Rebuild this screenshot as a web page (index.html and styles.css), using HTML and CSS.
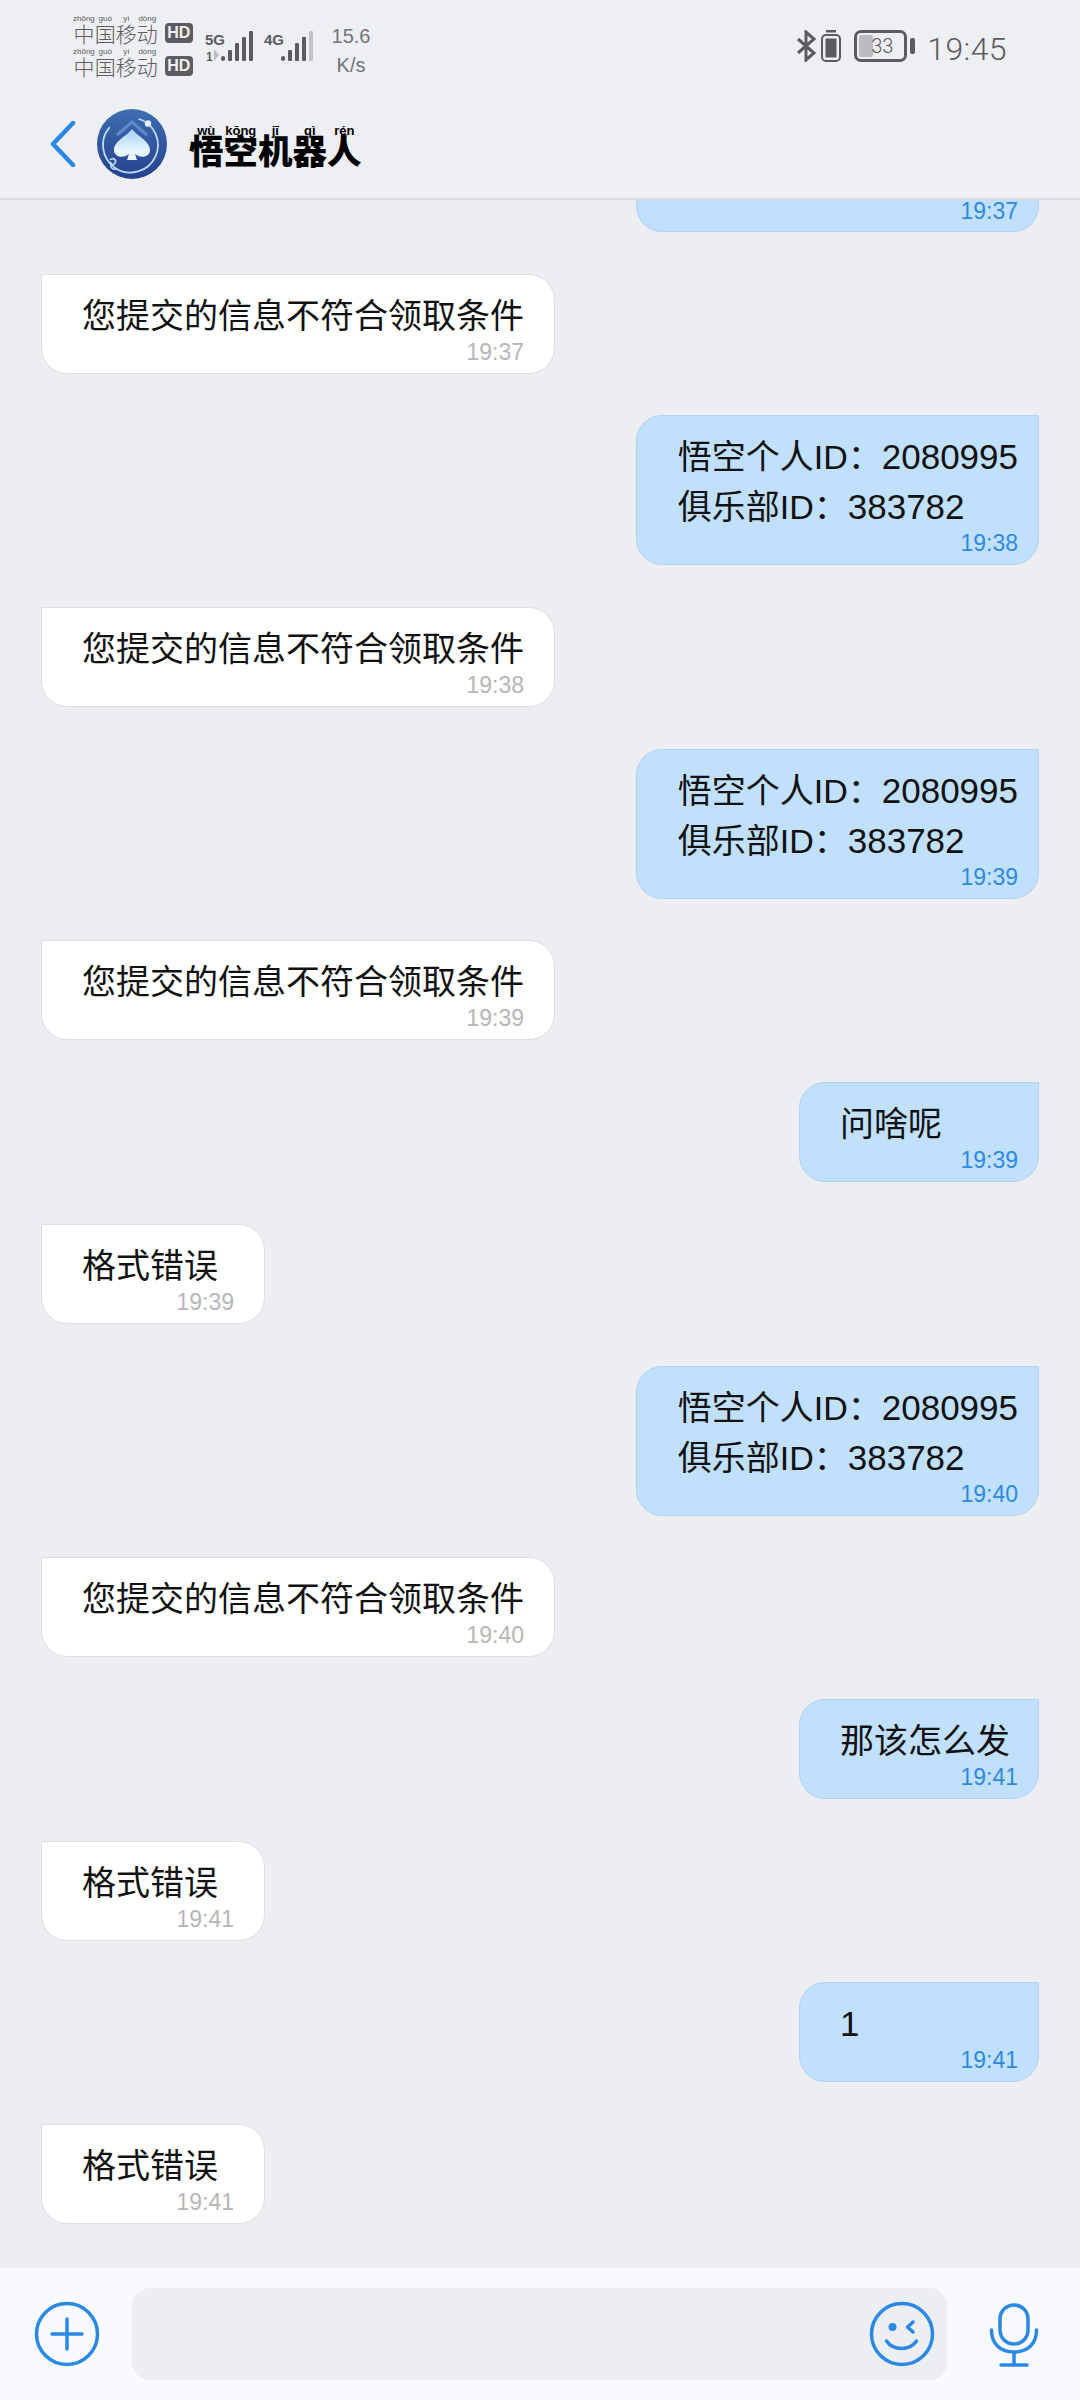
FILE: index.html
```html
<!DOCTYPE html>
<html lang="zh">
<head>
  <meta charset="UTF-8">
  <meta name="viewport" content="width=device-width, initial-scale=1">
  <title>悟空机器人</title>
  <link rel="stylesheet" href="styles.css">
</head>
<body>
<div class="app">

  <header class="top">
    <div class="status">
      <div class="carriers">
        <div class="carrier">
          <ruby>中<rt>zhōng</rt>国<rt>guó</rt>移<rt>yí</rt>动<rt>dòng</rt></ruby>
          <span class="hd">HD</span>
        </div>
        <div class="carrier">
          <ruby>中<rt>zhōng</rt>国<rt>guó</rt>移<rt>yí</rt>动<rt>dòng</rt></ruby>
          <span class="hd">HD</span>
        </div>
      </div>

      <!-- 5G signal -->
      <svg class="signal" width="50" height="36" viewBox="0 0 50 36">
        <text x="0" y="16" class="net">5G</text>
        <text x="1" y="32" class="net-small">1</text>
        <path d="M9 20v12l5-6z" fill="#bdbdc1"/>
        <rect x="16" y="27" width="4" height="5" rx="2" fill="#5b5b60"/>
        <rect x="23" y="21" width="4" height="11" rx="1" fill="#5b5b60"/>
        <rect x="30" y="14" width="4" height="18" rx="1" fill="#5b5b60"/>
        <rect x="37" y="8" width="4" height="24" rx="1" fill="#5b5b60"/>
        <rect x="44" y="2" width="4" height="30" rx="1" fill="#5b5b60"/>
      </svg>

      <!-- 4G signal -->
      <svg class="signal signal-b" width="50" height="36" viewBox="0 0 50 36">
        <text x="0" y="16" class="net">4G</text>
        <rect x="17" y="27" width="4" height="5" rx="2" fill="#5b5b60"/>
        <rect x="24" y="21" width="4" height="11" rx="1" fill="#5b5b60"/>
        <rect x="31" y="14" width="4" height="18" rx="1" fill="#5b5b60"/>
        <rect x="38" y="8" width="4" height="24" rx="1" fill="#5b5b60"/>
        <rect x="45" y="2" width="4" height="30" rx="1" fill="#c4c4c8"/>
      </svg>

      <div class="speed"><span>15.6</span><span>K/s</span></div>

      <div class="status-right">
        <svg class="bt" width="20" height="32" viewBox="0 0 20 32" fill="none" stroke="#5b5b60" stroke-width="3">
          <path d="M1 9l16 14-8 7V2l8 7L1 23"/>
        </svg>
        <svg class="batt-small" width="20" height="32" viewBox="0 0 20 32">
          <rect x="5" y="0" width="10" height="2.5" fill="#5b5b60"/>
          <rect x="1" y="5" width="18" height="26" rx="4" fill="none" stroke="#5b5b60" stroke-width="2"/>
          <rect x="4.5" y="8.5" width="11" height="19" fill="#5b5b60"/>
        </svg>
        <div class="battery">
          <div class="battery-body"><span class="battery-fill"></span><span class="battery-num">33</span></div>
          <span class="battery-nub"></span>
        </div>
        <span class="clock">19:45</span>
      </div>
    </div>

    <div class="nav">
      <svg class="back" width="26" height="46" viewBox="0 0 26 46" fill="none" stroke="#2b88e4" stroke-width="4.5" stroke-linecap="round" stroke-linejoin="round">
        <path d="M23 2L3 23l20 21"/>
      </svg>
      <svg class="avatar" width="70" height="72" viewBox="0 0 70 72">
        <defs>
          <linearGradient id="disc" x1="0" y1="0" x2="0" y2="1">
            <stop offset="0" stop-color="#3d6db0"/>
            <stop offset="1" stop-color="#27418f"/>
          </linearGradient>
          <linearGradient id="spade" x1="0" y1="0" x2="0" y2="1">
            <stop offset="0" stop-color="#a4d0f6"/>
            <stop offset="0.7" stop-color="#eaf6ff"/>
          </linearGradient>
        </defs>
        <circle cx="35" cy="36" r="35" fill="url(#disc)"/>
        <path d="M49 14A27.500 27.500 0 1 1 19 13" fill="none" stroke="#bcdcf6" stroke-width="1.800" transform="rotate(-18 35 36)"/>
        <path d="M20 27L35 14l15 13" fill="none" stroke="#5f8cc6" stroke-width="3"/>
        <circle cx="51" cy="15.500" r="3.200" fill="#e6f3ff"/>
        <path d="M35 21c5 7 18 12 18 21 0 7-9 9-15 4l2 6H30l2-6c-6 5-15 3-15-4 0-9 13-14 18-21z" fill="url(#spade)"/>
        <path d="M13 52c3-3 7 0 5 3s-5 1-4-1M19 61c-4 1-7-3-4-5" fill="none" stroke="#bcdcf6" stroke-width="1.600"/>
      </svg>
      <h1 class="title"><ruby>悟<rt>wù</rt>空<rt>kōng</rt>机<rt>jī</rt>器<rt>qì</rt>人<rt>rén</rt></ruby></h1>
    </div>
  </header>

  <main class="chat">
    <div class="msg out cut"><div class="stamp">19:37</div></div>

    <div class="msg in">
      <div>您提交的信息不符合领取条件</div>
      <div class="stamp">19:37</div>
    </div>
    <div class="msg out">
      <div>悟空个人ID：<span class="num">2080995</span></div>
      <div>俱乐部ID：<span class="num">383782</span></div>
      <div class="stamp">19:38</div>
    </div>
    <div class="msg in">
      <div>您提交的信息不符合领取条件</div>
      <div class="stamp">19:38</div>
    </div>
    <div class="msg out">
      <div>悟空个人ID：<span class="num">2080995</span></div>
      <div>俱乐部ID：<span class="num">383782</span></div>
      <div class="stamp">19:39</div>
    </div>
    <div class="msg in">
      <div>您提交的信息不符合领取条件</div>
      <div class="stamp">19:39</div>
    </div>
    <div class="msg out short">
      <div>问啥呢</div>
      <div class="stamp">19:39</div>
    </div>
    <div class="msg in short">
      <div>格式错误</div>
      <div class="stamp">19:39</div>
    </div>
    <div class="msg out">
      <div>悟空个人ID：<span class="num">2080995</span></div>
      <div>俱乐部ID：<span class="num">383782</span></div>
      <div class="stamp">19:40</div>
    </div>
    <div class="msg in">
      <div>您提交的信息不符合领取条件</div>
      <div class="stamp">19:40</div>
    </div>
    <div class="msg out short">
      <div>那该怎么发</div>
      <div class="stamp">19:41</div>
    </div>
    <div class="msg in short">
      <div>格式错误</div>
      <div class="stamp">19:41</div>
    </div>
    <div class="msg out short">
      <div><span class="num">1</span></div>
      <div class="stamp">19:41</div>
    </div>
    <div class="msg in short">
      <div>格式错误</div>
      <div class="stamp">19:41</div>
    </div>
  </main>

  <footer class="composer">
    <svg class="plus" width="66" height="66" viewBox="0 0 66 66" fill="none" stroke="#2b88e4" stroke-width="3.500" stroke-linecap="round">
      <circle cx="33" cy="33" r="30.500"/>
      <path d="M18 33h30M33 18v30"/>
    </svg>
    <div class="input">
      <svg class="smile" width="66" height="66" viewBox="0 0 66 66" fill="none" stroke="#2b88e4" stroke-width="3.500" stroke-linecap="round" stroke-linejoin="round">
        <circle cx="33" cy="33" r="30.500"/>
        <circle cx="23.500" cy="26" r="4" fill="#2b88e4" stroke="none"/>
        <path d="M44 21l-5.500 5 5.500 5"/>
        <path d="M17.500 40c7 10 23 10 30 0"/>
      </svg>
    </div>
    <svg class="mic" width="50" height="66" viewBox="0 0 50 66" fill="none" stroke="#2b88e4" stroke-width="3.500" stroke-linecap="round">
      <rect x="11" y="2" width="28" height="39" rx="14"/>
      <path d="M2.500 27c0 14 9 22 22.500 22s22.500-8 22.500-22M25 49v12M12 62h26"/>
    </svg>
  </footer>

</div>
</body>
</html>
```

FILE: styles.css
```css
body {
  margin: 0;
  background: #edeef2;
  font-family: "Liberation Sans", "Noto Sans CJK SC", sans-serif;
  color: #111;
}
.app {
  width: 1080px;
  height: 2400px;
  display: flex;
  flex-direction: column;
  overflow: hidden;
}

/* header */
.top {
  flex: none;
  height: 200px;
  box-sizing: border-box;
  border-bottom: 2px solid #d9dade;
  background: #eeeff3;
  position: relative;
  z-index: 1;
}
.status {
  height: 100px;
  display: flex;
  align-items: flex-start;
  padding-left: 73px;
  color: #5b5b60;
}
.carriers {
  width: 123px;
  padding-top: 11px;
}
.carrier {
  height: 33px;
  display: flex;
  align-items: flex-end;
  font-size: 21px;
  line-height: 22px;
}
.carrier ruby {
  font-family: "Noto Sans CJK SC", sans-serif;
  font-weight: 300;
}
.carrier rt {
  font-size: 8px;
  line-height: 9px;
  font-family: "Liberation Sans", sans-serif;
}
.hd {
  width: 28px;
  height: 20px;
  margin-left: 7px;
  margin-bottom: 1px;
  border-radius: 4px;
  background: #5b5b60;
  color: #eeeff3;
  font-size: 16px;
  line-height: 20px;
  font-weight: bold;
  text-align: center;
}
.signal {
  margin: 29px 0 0 9px;
}
.signal-b {
  margin-left: 9px;
}
.net {
  font-size: 15px;
  font-weight: bold;
  fill: #5b5b60;
}
.net-small {
  font-size: 12px;
  font-weight: bold;
  fill: #5b5b60;
}
.speed {
  margin: 22px 0 0 17px;
  width: 40px;
  display: flex;
  flex-direction: column;
  align-items: center;
  font-size: 20px;
  line-height: 29px;
  color: #737378;
}
.status-right {
  margin-left: auto;
  padding: 30px 73px 0 0;
  display: flex;
  align-items: flex-start;
}
.bt {
  margin-right: 4px;
}
.battery {
  margin-left: 13px;
  display: flex;
  align-items: center;
  height: 32px;
}
.battery-body {
  width: 53px;
  height: 32px;
  box-sizing: border-box;
  border: 3px solid #5b5b60;
  border-radius: 7px;
  position: relative;
  text-align: center;
  font-size: 20px;
  line-height: 26px;
}
.battery-fill {
  position: absolute;
  left: 2px;
  top: 2px;
  bottom: 2px;
  width: 14px;
  border-radius: 2px;
  background: #bcbcc0;
}
.battery-num {
  position: relative;
  font-family: Roboto, sans-serif;
  font-weight: 300;
  margin-left: 3px;
}
.battery-nub {
  width: 5px;
  height: 16px;
  margin-left: 3px;
  border-radius: 2px;
  background: #5b5b60;
}
.clock {
  margin: 0 0 0 12px;
  font-family: Roboto, sans-serif;
  font-weight: 300;
  font-size: 32px;
  line-height: 38px;
  letter-spacing: 0.4px;
}

.nav {
  height: 98px;
  display: flex;
  align-items: flex-start;
  padding-left: 50px;
}
.back {
  margin-top: 21px;
}
.avatar {
  margin: 8px 0 0 21px;
}
.title {
  margin: 19px 0 0 22px;
  font-family: "Noto Sans CJK SC", sans-serif;
  font-size: 34.500px;
  line-height: 30px;
  font-weight: 900;
  color: #000;
}
.title rt {
  position: relative;
  top: 5px;
  font-size: 13px;
  line-height: 12px;
  font-family: "Liberation Sans", sans-serif;
  font-weight: bold;
}

/* messages */
.chat {
  flex: 1;
  min-height: 0;
  overflow: hidden;
  display: flex;
  flex-direction: column;
  gap: 41.700px;
  padding: 0 41px;
}
.msg {
  box-sizing: border-box;
  flex: none;
  padding: 16px 30px 8px 40px;
  font-size: 34px;
  line-height: 50px;
  border: 1px solid #dddee2;
  background: #fff;
  border-radius: 0 26px 26px 26px;
}
.msg.in {
  align-self: flex-start;
}
.msg.out {
  align-self: flex-end;
  padding-left: 41px;
  padding-right: 20px;
  background: #c1e0fe;
  border-color: #b2d2f0;
  border-radius: 26px 0 26px 26px;
}
.msg.in.short {
  min-width: 224px;
}
.msg.out.short {
  min-width: 240px;
  padding-left: 40px;
}
/* the bubble that has scrolled under the header */
.msg.cut {
  width: 403px;
  height: 32px;
  padding-top: 0;
  padding-bottom: 9px;
  border-top: 0;
  border-top-left-radius: 0;
}
.msg.cut .stamp {
  margin-top: 0;
  line-height: 22px;
}
.num {
  font-size: 35px;
  line-height: 1;
}
.stamp {
  margin-top: -2px;
  font-size: 23px;
  line-height: 26px;
  text-align: right;
  color: #b6b6b9;
}
.out .stamp {
  color: #2e8ae0;
}

/* bottom input */
.composer {
  flex: none;
  height: 132px;
  background: #f8faff;
  display: flex;
  align-items: center;
  padding-left: 34px;
}
.input {
  width: 815px;
  height: 92px;
  margin-left: 32px;
  border-radius: 18px;
  background: #edeef2;
  display: flex;
  align-items: center;
  justify-content: flex-end;
  padding-right: 12px;
  box-sizing: border-box;
}
.mic {
  margin-left: 42px;
  margin-top: 4px;
}
```
